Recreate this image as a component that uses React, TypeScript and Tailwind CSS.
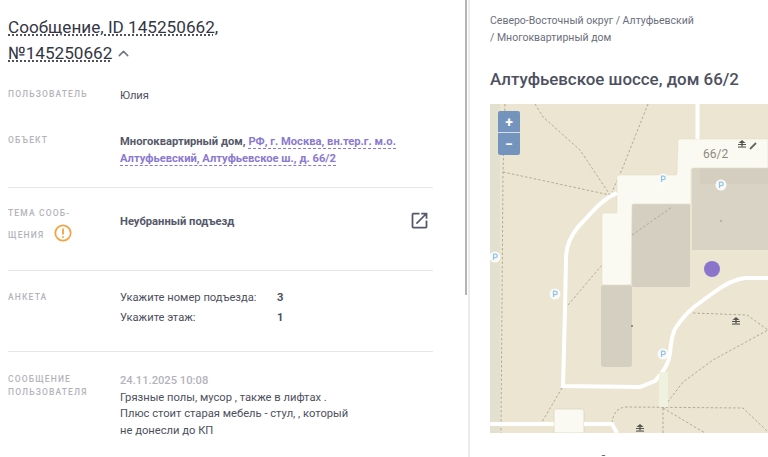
import { ChevronUp } from "lucide-react";
import { MdOpenInNew } from "react-icons/md";
import type { ReactNode } from "react";

function Row({ label, className, children }: { label: ReactNode; className: string; children: ReactNode }) {
  return (
    <div className={`flex ${className}`}>
      <div className="w-[112px] shrink-0 text-[8.5px] font-medium tracking-[1.15px] text-[#b3b3bb] uppercase">{label}</div>
      <div className="min-w-0 flex-1 text-[11.2px] text-[#4d5060]">{children}</div>
    </div>
  );
}

function Parking({ x, y }: { x: number; y: number }) {
  return (
    <g>
      <circle cx={x} cy={y} r={5.5} fill="#fbfaf4" />
      <path d={`M${x - 1.5} ${y + 3}V${y - 2.8}h2a1.6 1.6 0 0 1 0 3.4h-2`} fill="none" stroke="#8fc4ee" strokeWidth={1.2} />
    </g>
  );
}

function Bench({ x, y }: { x: number; y: number }) {
  return (
    <g fill="#55554f">
      <path d={`M${x} ${y - 4}l3.5 3h-7z`} />
      <rect x={x - 4} y={y} width={8} height={1} />
      <rect x={x - 0.7} y={y - 1} width={1.4} height={3.5} />
      <rect x={x - 4} y={y + 2.5} width={8} height={1.1} />
    </g>
  );
}

function MapDrawing() {
  const dash = { fill: "none", stroke: "#a9a491", strokeWidth: 0.9, strokeDasharray: "2.5 2" };
  return (
    <svg viewBox="490 104 278 329" className="h-full w-full">
      <rect x={490} y={104} width={278} height={329} fill="#ebe5d2" />
      <rect x={490} y={104} width={10} height={329} fill="#e2e1d0" />
      <rect x={692} y={168} width={76} height={82} fill="#d8d3c4" />
      <rect x={700} y={168} width={68} height={16} fill="#d3cec0" />
      <rect x={632} y={204} width={58} height={83} rx={1.5} fill="#d4cfc0" />
      <rect x={601} y={285} width={31} height={82} rx={3} fill="#d4cfc0" />
      <g {...dash}>
        <path d="M505 104L503 172L501 433" />
        <path d="M503 172L610 195" />
        <path d="M535 104L543 117L580 150L610 195" />
        <path d="M648 104L623 167L612 192" />
        <path d="M568 305L602 265" />
        <path d="M632 235L672 207" />
        <path d="M693 313L747 315L768 330L713 360L683 382L667 403L663 408" />
        <path d="M612 423C613 413 618 407 627 407L743 408L768 432" />
        <path d="M663 408L705 433M663 408V433M562 388L542 422" />
      </g>
      <path d="M678 140Q678 139 680 139H768V168H694Q691 168 691 170V203Q691 204 689 204H633Q632 204 632 206L631 284Q631 285 629 285H604Q602 285 602 283V215Q602 213 604 213H616Q617 213 617 211V177Q617 175 619 175H676Q677 175 677 173Z" fill="#fbfaf2" stroke="#e2dcc8" strokeWidth={0.6} />
      <path d="M554 433V411Q554 409 556 409H582Q584 409 584 411V433Z" fill="#fbfaf2" stroke="#dcd6c2" strokeWidth={0.8} />
      <g fill="none" stroke="#ffffff" strokeWidth={4}>
        <path d="M697.5 104V139" />
        <path d="M617 193C600 200 590 215 578 227C570 237 566 248 566 258L565 310L563 386L640 387L655 381C664 372 669 362 670 353C671 340 672 335 675 329C682 318 688 312 694 307L713 293C725 284 735 279 745 278H768" />
        <path d="M490 424H554M584 424H612L617 433" />
      </g>
      <rect x={659} y={372} width={9} height={35} fill="#eff2df" />
      <Parking x={663} y={179} />
      <Parking x={721} y={185} />
      <Parking x={495} y={257} />
      <Parking x={555} y={294} />
      <Parking x={663} y={354} />
      <Bench x={742} y={144} />
      <Bench x={736} y={321} />
      <Bench x={640} y={428} />
      <path d="M750 149L756 143" stroke="#66665f" strokeWidth={1.8} />
      <circle cx={721} cy={221} r={1.2} fill="#b9b5a6" />
      <circle cx={632} cy={326} r={1} fill="#77746a" />
      <text x={703} y={158} fontSize={12} fill="#8d8b80" fontFamily="Roboto, sans-serif">66/2</text>
      <circle cx={712} cy={269} r={8} fill="#8b74cc" />
    </svg>
  );
}

export default function App() {
  return (
    <div className="flex h-[457px] w-[768px] overflow-hidden bg-white font-['Roboto',sans-serif]">
      <div className="relative h-full w-[470px] shrink-0 border-r-2 border-[#ececec] pr-[35px] pl-2">
        <div className="absolute top-0 right-[1px] h-[295px] w-[2px] bg-[#b2b2ba]" />
        <h1 className="pt-[14px] text-[17.15px] leading-[26px] font-normal text-[#333645]">
          <span className="underline decoration-dotted decoration-[#333645] underline-offset-2">Сообщение, ID 145250662,</span>
          <br />
          <span className="underline decoration-dotted decoration-[#333645] underline-offset-2">№145250662</span>
          <ChevronUp className="ml-[3px] inline-block h-[17px] w-[17px] align-[-3px] text-[#6f7280]" strokeWidth={2} />
        </h1>
        <Row label="Пользователь" className="pt-[21px] leading-[14px]">
          <span className="relative top-[2px] leading-[14px]">Юлия</span>
        </Row>
        <Row label="Объект" className="border-b border-[#e6e6e6] pt-[32px] pb-[20px] leading-[14px]">
          <div className="leading-[17px] font-bold text-[#55586a]">
            Многоквартирный дом,{" "}
            <span className="border-b border-dashed border-[#8b79cf] text-[#8b79cf]">
              РФ, г. Москва, вн.тер.г. м.о. Алтуфьевский, Алтуфьевское ш., д. 66/2
            </span>
          </div>
        </Row>
        <Row
          label={
            <div className="leading-[22px]">
              Тема сооб-
              <br />
              щения
              <svg viewBox="0 0 18 18" className="ml-[10px] inline-block h-[18px] w-[18px] align-[-4px]">
                <circle cx={9} cy={9} r={7.7} fill="none" stroke="#f5a13c" strokeWidth={1.7} />
                <path d="M9 4.6V10.4M9 12.2V13.8" stroke="#f5a13c" strokeWidth={1.8} />
              </svg>
            </div>
          }
          className="h-[83px] border-b border-[#e6e6e6] pt-[14px]"
        >
          <div className="flex items-start justify-between">
            <span className="mt-[13px] leading-[14px] font-bold text-[#55586a]">Неубранный подъезд</span>
            <MdOpenInNew className="mt-[8px] mr-[3px] h-[21px] w-[21px] text-[#55586a]" />
          </div>
        </Row>
        <Row label="Анкета" className="h-[81px] border-b border-[#e6e6e6] pt-[20px] leading-[12px]">
          <div className="grid grid-cols-[157px_1fr] gap-y-[6px] leading-[14px]">
            <span>Укажите номер подъезда:</span>
            <b className="font-bold">3</b>
            <span>Укажите этаж:</span>
            <b className="font-bold">1</b>
          </div>
        </Row>
        <Row
          label={
            <div className="leading-[12.5px]">
              Сообщение
              <br />
              пользователя
            </div>
          }
          className="pt-[21px]"
        >
          <div className="leading-[16.5px]">
            <div className="font-medium text-[#b3b3bb]">24.11.2025 10:08</div>
            Грязные полы, мусор , также в лифтах .
            <br />
            Плюс стоит старая мебель - стул, , который
            <br />
            не донесли до КП
          </div>
        </Row>
      </div>
      <div className="min-w-0 flex-1 pt-[13px] pl-5">
        <div className="text-[10.5px] leading-[16.5px] text-[#6b6e7c]">
          Северо-Восточный округ / Алтуфьевский
          <br />/ Многоквартирный дом
        </div>
        <h2 className="pt-[21px] text-[16.9px] leading-[24px] font-medium text-[#4d5060]">Алтуфьевское шоссе, дом 66/2</h2>
        <div className="relative mt-[13px] h-[329px] w-[278px]">
          <MapDrawing />
          <div className="absolute top-[7px] left-2 flex w-[22px] flex-col overflow-hidden rounded-[2px] bg-white/60 text-white">
            <button className="h-[22px] border-b border-white/70 bg-[#7594bd] text-[14px] leading-[20px] font-bold">+</button>
            <button className="h-[22px] bg-[#7594bd] text-[14px] leading-[20px] font-bold">−</button>
          </div>
        </div>
        <div className="pt-[20px] pl-[110px] text-[12px] leading-[14px] text-[#4d5060]">й</div>
      </div>
    </div>
  );
}
